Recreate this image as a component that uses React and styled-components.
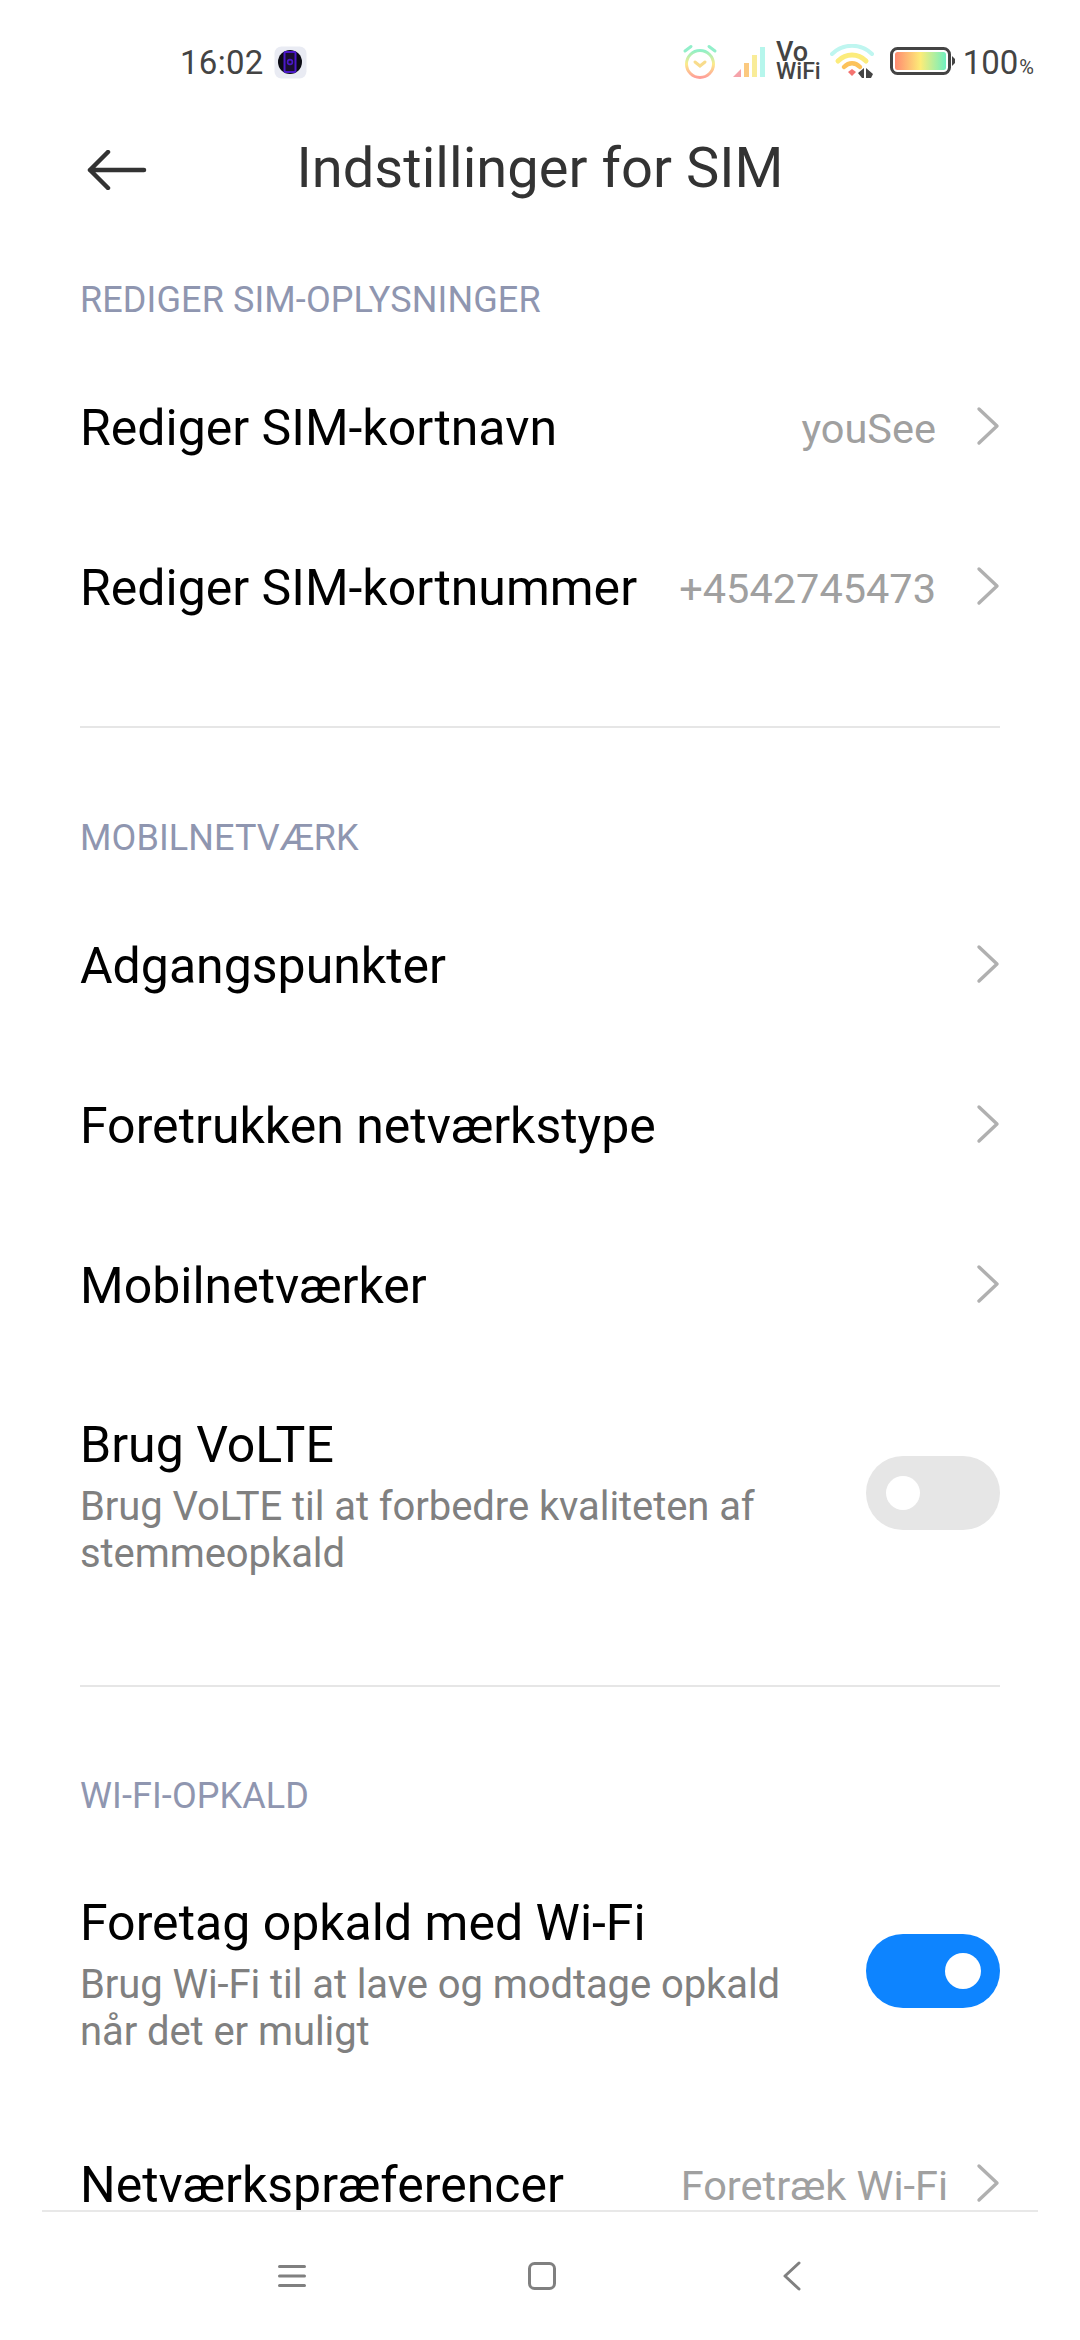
import React from 'react';
import styled, { createGlobalStyle } from 'styled-components';

const Global = createGlobalStyle`
  html, body { margin: 0; padding: 0; background: #fff; }
  * { box-sizing: border-box; }
`;

const Page = styled.div`
  width: 1080px;
  height: 2340px;
  display: flex;
  flex-direction: column;
  background: #fff;
  font-family: Roboto, "Noto Sans", sans-serif;
  overflow: hidden;
`;

const StatusBar = styled.div`
  height: 124px;
  flex: none;
  display: flex;
  align-items: center;
  justify-content: space-between;
  padding: 0 46px 0 180px;
  color: #444;
`;

const StatusLeft = styled.div`
  display: flex;
  align-items: center;
  gap: 10px;
`;

const StatusRight = styled.div`
  display: flex;
  align-items: center;
`;

const Time = styled.span`
  font-size: 33px;
  letter-spacing: 0.3px;
`;

const Battery = styled.span`
  font-size: 33px;
  margin-left: 7px;
  small { font-size: 20px; margin-left: 1px; }
`;

const Header = styled.div`
  height: 90px;
  flex: none;
  display: flex;
  align-items: center;
  justify-content: center;
  position: relative;
  padding-bottom: 2px;
`;

const BackButton = styled.div`
  position: absolute;
  left: 87px;
  top: 26px;
  display: flex;
`;

const Title = styled.h1`
  margin: 0;
  font-size: 56px;
  font-weight: 400;
  letter-spacing: 0.05px;
  color: #333;
`;

const Content = styled.div`
  flex: 1;
  min-height: 0;
  overflow: hidden;
  padding: 0 80px;
`;

const SectionLabel = styled.div`
  font-size: 36px;
  line-height: 40px;
  letter-spacing: 0.1px;
  color: #8f96b0;
  margin-top: ${(p) => p.$top}px;
  margin-bottom: 28px;
`;

const Row = styled.div`
  min-height: 160px;
  display: flex;
  align-items: center;
  justify-content: space-between;
  gap: 30px;
  padding: ${(p) => (p.$tall ? '49px 0 50px' : '0')};
`;

const Texts = styled.div`
  display: flex;
  flex-direction: column;
  min-width: 0;
`;

const RowTitle = styled.div`
  font-size: 50px;
  line-height: 60px;
  color: #000;
  white-space: nowrap;
`;

const RowSubs = styled.div`
  margin-top: 8px;
`;

const RowSub = styled.div`
  font-size: 40px;
  line-height: 47px;
  letter-spacing: -0.08px;
  color: #808080;
  width: 720px;
`;

const Trailing = styled.div`
  display: flex;
  align-items: center;
  flex: none;
`;

const Value = styled.span`
  font-size: 41.5px;
  color: #a0a0a0;
  margin-right: ${(p) => p.$gap}px;
`;

const ChevronBox = styled.div`
  display: flex;
  margin-bottom: 4px;
`;

const Switch = styled.div`
  width: 134px;
  height: 74px;
  margin-bottom: 6px;
  border-radius: 37px;
  background: ${(p) => (p.$on ? '#0d84ff' : '#e6e6e6')};
  display: flex;
  align-items: center;
  justify-content: ${(p) => (p.$on ? 'flex-end' : 'flex-start')};
  padding: 0 ${(p) => (p.$on ? 19 : 20)}px;
`;

const Knob = styled.div`
  width: ${(p) => (p.$on ? 36 : 34)}px;
  height: ${(p) => (p.$on ? 36 : 34)}px;
  border-radius: 50%;
  background: #fff;
`;

const Divider = styled.div`
  height: 2px;
  background: #e6e6e6;
  margin-top: ${(p) => p.$top}px;
`;

const NavBar = styled.div`
  height: 130px;
  flex: none;
  margin: 0 42px;
  border-top: 2px solid #e8e8e8;
  display: grid;
  grid-template-columns: repeat(3, 250px);
  justify-content: center;
  justify-items: center;
  align-items: center;
  align-content: start;
  padding: 49px 0 0 3px;
`;

const VoWifi = styled.div`
  display: flex;
  flex-direction: column;
  font-size: 23px;
  line-height: 20px;
  font-weight: 500;
  color: #444;
  margin: 0 9px 0 10px;
`;

const VoText = styled.span`
  font-size: 27px;
`;

const Gap = styled.div`
  width: ${(p) => p.$w}px;
`;

const Chevron = () => (
  <ChevronBox>
    <svg width="24" height="40" viewBox="0 0 24 40" fill="none" stroke="#b0b0b0" strokeWidth="3.4" strokeLinecap="round" strokeLinejoin="round">
      <path d="M3 3 L21 20 L3 37" />
    </svg>
  </ChevronBox>
);

const AlarmIcon = () => (
  <svg width="36" height="36" viewBox="0 0 36 36" fill="none" strokeWidth="3" strokeLinecap="round">
    <defs>
      <linearGradient id="al" x1="0" y1="0" x2="0" y2="1">
        <stop offset="0" stopColor="#8ff0c8" />
        <stop offset="0.5" stopColor="#fdeb8a" />
        <stop offset="1" stopColor="#ff9f98" />
      </linearGradient>
    </defs>
    <circle cx="18" cy="20" r="13.5" stroke="url(#al)" />
    <path d="M13 18 L18 22 L23 18" stroke="#f8dc8c" />
    <path d="M3 7 L9 2.5 M33 7 L27 2.5" stroke="#92efca" />
  </svg>
);

const SignalIcon = () => (
  <svg width="34" height="32" viewBox="0 0 34 32">
    <path d="M1 31 L9 23 V31 Z" fill="#f5a3aa" />
    <rect x="12" y="17" width="5" height="14" fill="#fbc97f" />
    <rect x="20" y="9" width="5" height="22" fill="#f9ec98" />
    <rect x="28" y="1" width="5" height="30" fill="#b6f6ec" />
  </svg>
);

const WifiIcon = () => (
  <svg width="44" height="36" viewBox="0 0 44 36" fill="none" strokeLinecap="round">
    <path d="M2 10 C13 -1 31 -1 42 10" stroke="#bff6f0" strokeWidth="4" />
    <path d="M8 17 C16 9 28 9 36 17" stroke="#fcec7c" strokeWidth="5" />
    <path d="M14 23 C19 18 25 18 30 23" stroke="#fcc25a" strokeWidth="4.5" />
    <path d="M18 28 L22 25 L26 28 L22 32 Z" fill="#f4726f" />
    <path d="M28 29 L34 24 V34 H32 Z M36 24 L43 30 L41 34 H36 Z" fill="#444" />
  </svg>
);

const BatteryIcon = () => (
  <svg width="66" height="30" viewBox="0 0 66 30">
    <defs>
      <linearGradient id="bt" x1="0" y1="0" x2="1" y2="0">
        <stop offset="0" stopColor="#ff8a70" />
        <stop offset="0.5" stopColor="#fdec78" />
        <stop offset="1" stopColor="#6ff0c0" />
      </linearGradient>
    </defs>
    <rect x="1.5" y="1.5" width="58" height="25" rx="6" fill="none" stroke="#444" strokeWidth="3" />
    <rect x="5" y="5" width="51" height="18" rx="2.5" fill="url(#bt)" />
    <path d="M62 9 L65 12 V16 L62 19 Z" fill="#444" />
  </svg>
);

const NotifIcon = () => (
  <svg width="33" height="33" viewBox="0 0 33 33">
    <rect x="0.5" y="0.5" width="32" height="32" rx="7" fill="#e9ebf3" />
    <circle cx="16" cy="16" r="12" fill="#0b0b14" />
    <rect x="10.5" y="6" width="11" height="20" rx="1" fill="#1a1030" stroke="#4a18c8" strokeWidth="2" />
    <circle cx="16" cy="16" r="2.4" fill="none" stroke="#4a18c8" strokeWidth="1.6" />
  </svg>
);

function SettingRow({ title, sub, value, gap = 40, on, toggle }) {
  return (
    <Row $tall={!!sub}>
      <Texts>
        <RowTitle>{title}</RowTitle>
        {sub && (
          <RowSubs>
            {sub.map((line) => <RowSub key={line}>{line}</RowSub>)}
          </RowSubs>
        )}
      </Texts>
      <Trailing>
        {toggle ? (
          <Switch $on={on}><Knob $on={on} /></Switch>
        ) : (
          <>
            {value && <Value $gap={gap}>{value}</Value>}
            <Chevron />
          </>
        )}
      </Trailing>
    </Row>
  );
}

export default function App() {
  return (
    <Page>
      <Global />
      <StatusBar>
        <StatusLeft>
          <Time>16:02</Time>
          <NotifIcon />
        </StatusLeft>
        <StatusRight>
          <AlarmIcon />
          <Gap $w={14} />
          <SignalIcon />
          <VoWifi><VoText>Vo</VoText><span>WiFi</span></VoWifi>
          <WifiIcon />
          <Gap $w={16} />
          <BatteryIcon />
          <Battery>100<small>%</small></Battery>
        </StatusRight>
      </StatusBar>
      <Header>
        <BackButton>
          <svg width="60" height="40" viewBox="0 0 60 40" fill="none" stroke="#333" strokeWidth="4.5" strokeLinecap="round" strokeLinejoin="round">
            <path d="M3 20 H57 M21 2 L3 20 L21 38" />
          </svg>
        </BackButton>
        <Title>Indstillinger for SIM</Title>
      </Header>
      <Content>
        <SectionLabel $top={66}>REDIGER SIM-OPLYSNINGER</SectionLabel>
        <SettingRow title="Rediger SIM-kortnavn" value="youSee" />
        <SettingRow title="Rediger SIM-kortnummer" value="+4542745473" />
        <Divider $top={58} />
        <SectionLabel $top={90}>MOBILNETVÆRK</SectionLabel>
        <SettingRow title="Adgangspunkter" />
        <SettingRow title="Foretrukken netværkstype" />
        <SettingRow title="Mobilnetværker" />
        <SettingRow title="Brug VoLTE" sub={['Brug VoLTE til at forbedre kvaliteten af', 'stemmeopkald']} toggle />
        <Divider $top={58} />
        <SectionLabel $top={89}>WI-FI-OPKALD</SectionLabel>
        <SettingRow title="Foretag opkald med Wi-Fi" sub={['Brug Wi-Fi til at lave og modtage opkald', 'når det er muligt']} toggle on />
        <SettingRow title="Netværkspræferencer" value="Foretræk Wi-Fi" gap={28} />
      </Content>
      <NavBar>
        <svg width="28" height="24" viewBox="0 0 28 24" stroke="#808080" strokeWidth="3" strokeLinecap="round">
          <path d="M1.5 2.5 H26.5 M1.5 12 H26.5 M1.5 21.5 H26.5" />
        </svg>
        <svg width="28" height="28" viewBox="0 0 28 28" fill="none" stroke="#808080" strokeWidth="3">
          <rect x="1.5" y="1.5" width="25" height="25" rx="5" />
        </svg>
        <svg width="18" height="30" viewBox="0 0 18 30" fill="none" stroke="#808080" strokeWidth="3" strokeLinecap="round" strokeLinejoin="round">
          <path d="M16 2 L2 15 L16 28" />
        </svg>
      </NavBar>
    </Page>
  );
}
